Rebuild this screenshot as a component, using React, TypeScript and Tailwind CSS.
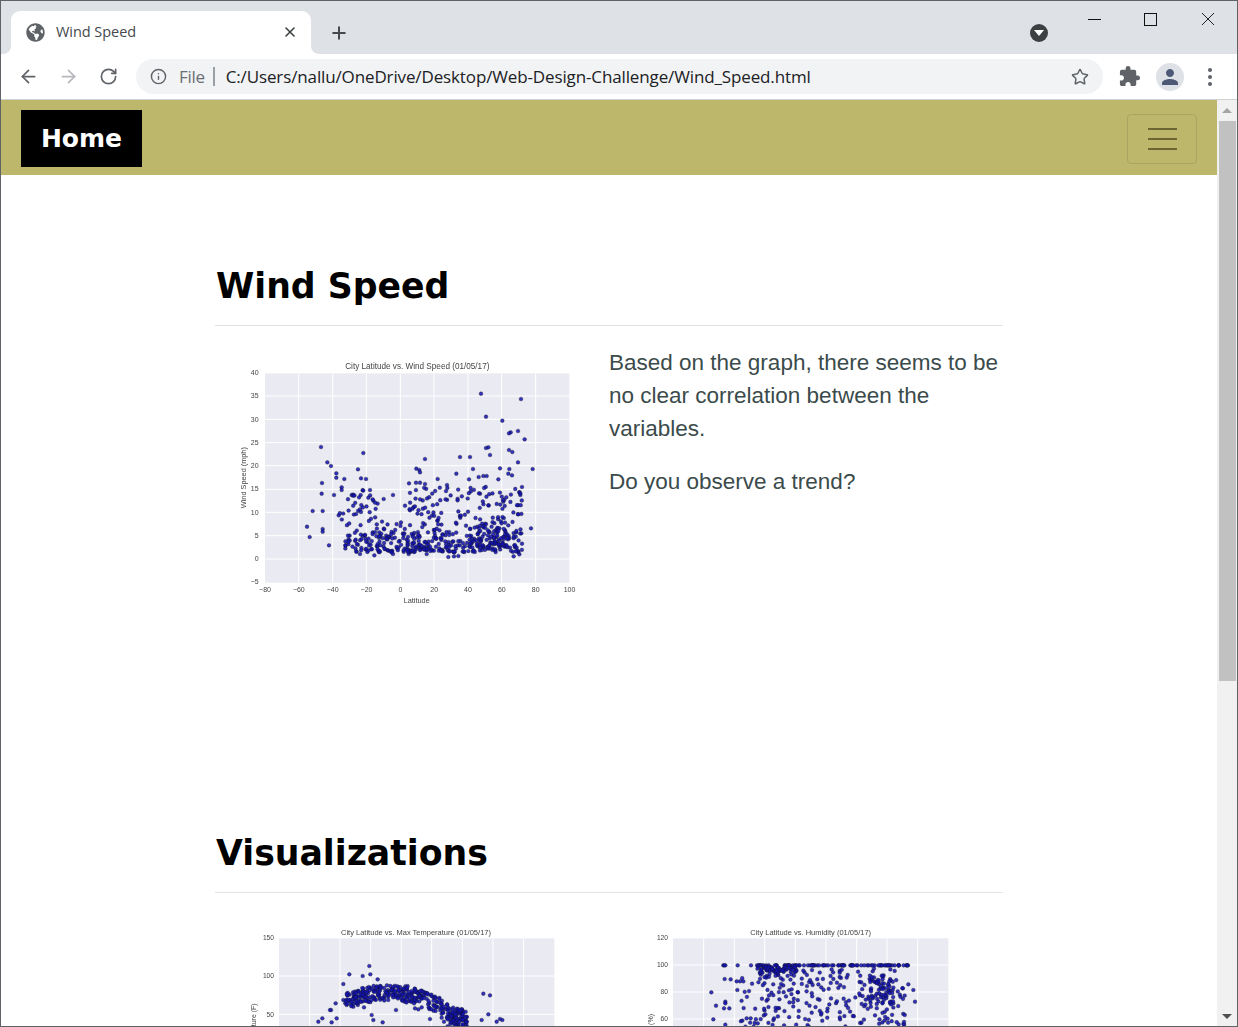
import React from 'react';
import { ArrowLeft, ArrowRight, RotateCw, Info, Star, Plus, X } from 'lucide-react';
import { FaGlobeAmericas } from 'react-icons/fa';
import { MdExtension, MdPerson } from 'react-icons/md';

type Pt = [number, number];

// small seeded random so the scatter stays the same between runs
const makeRand = (seed: number) => () => {
  seed = (seed * 1664525 + 1013904223) % 4294967296;
  return seed / 4294967296;
};

const windOutliers: Pt[] = [
  [753,116],[873,132],[768,185],[817,197],[864,228],[842,232],[837,235],[884,253],[273,276],[292,322],[303,333],[400,294],
  [585,312],[690,306],[720,306],[775,277],[768,279],[780,300],[837,285],[847,291],[864,322],[908,342],[384,343],[393,370],
  [408,372],[319,355],[319,368],[343,372],[276,384],[275,416],[278,468],[248,468],[231,515],[239,546],[278,522],[278,530],
  [297,571],[559,341],[568,345],[570,352],[537,385],[558,383],[570,383],[585,387],[876,396],[871,420],[903,520],[729,342],
  [679,356],[623,372],[651,390],[717,373],[746,366],[760,363],[770,363],[805,373],[835,356],[846,361],[838,342],[810,340],
  [489,420],[461,432],[525,452],[335,397],[335,405],[312,420],[365,420],[392,420],[420,405],[430,437],[428,433],
  [655,606],[672,604],[685,603],[851,604],[868,598],[390,597],[433,601],[489,597],[536,597],[590,597],
];

const windPoints = (() => {
  const r = makeRand(17);
  const pts: Pt[] = [...windOutliers];
  for (let i = 0; i < 240; i++) pts.push([530 + r() * 350, 592 - 90 * r() * Math.sqrt(r())]);
  for (let i = 0; i < 120; i++) pts.push([345 + r() * 190, 592 - 105 * r() * Math.sqrt(r())]);
  for (let i = 0; i < 105; i++) pts.push([530 + r() * 350, 395 + r() * 115]);
  for (let i = 0; i < 30; i++) pts.push([325 + r() * 120, 405 + r() * 95]);
  for (let i = 0; i < 40; i++) pts.push([740 + r() * 100, 500 + r() * 80]);
  return pts;
})();

const tempPoints = (() => {
  const r = makeRand(5);
  const pts: Pt[] = [
    [388,138],[328,163],[368,168],[391,163],[413,178],[310,192],[730,221],[750,226],[745,283],[770,305],[780,297],[787,300],
    [395,285],[400,300],[428,307],[725,300],[273,270],[270,270],[290,295],[275,307],[247,295],[235,305],[570,297],[605,293],
    [612,305],[287,250],[468,270],[525,265],[535,268],[545,262],[310,240],[322,225],[340,260],[372,262],
  ];
  for (let i = 0; i < 330; i++) {
    const x = 315 + r() * 370;
    const base = x < 450 ? 205 + (450 - x) * (450 - x) * 0.0013 : 205 + (x - 450) * (x - 450) * 0.00184;
    pts.push([x, base + r() * 50 - 12]);
  }
  for (let i = 0; i < 45; i++) pts.push([620 + r() * 60, 265 + r() * 55]);
  return pts;
})();

const humidityPoints = (() => {
  const r = makeRand(41);
  const pts: Pt[] = [
    [214,217],[228,257],[256,245],[256,250],[252,265],[268,265],[254,177],[272,178],[220,298],[256,314],[820,210],[825,245],
    [805,193],[250,136],[253,136],[256,136],[293,136],[333,136],[290,184],[300,184],[310,184],[292,210],[320,295],[332,295],
  ];
  for (let i = 0; i < 90; i++) pts.push([350 + r() * 455, 136]);
  for (let i = 0; i < 70; i++) pts.push([350 + r() * 120, 140 + r() * r() * 60]);
  for (let i = 0; i < 230; i++) pts.push([300 + r() * 495, 145 + r() * 175]);
  for (let i = 0; i < 50; i++) pts.push([690 + r() * 70, 165 + r() * 90]);
  return pts;
})();

interface ScatterProps {
  width: number;
  height: number;
  title: string;
  titleX: number;
  titleY: number;
  titleSize: number;
  tickSize: number;
  plot: { left: number; right: number; top: number; bottom: number };
  vLines: number[];
  hLines: number[];
  yTicks: { y: number; label: string }[];
  xTicks?: { x: number; label: string }[];
  yLabel: { x: number; y: number; text: string; anchor: 'middle' | 'end' };
  xLabel?: { x: number; y: number; text: string };
  points: Pt[];
  tickX: number;
}

// coordinates here are read off the 3x crops, so viewBox is 3x the on-screen size
const Scatter: React.FC<ScatterProps> = ({ width, height, title, titleX, titleY, titleSize, tickSize, plot, vLines, hLines, yTicks, xTicks, yLabel, xLabel, points, tickX }) => (
  <svg width={width} height={height} viewBox={`0 0 ${width * 3} ${height * 3}`} className="block blur-[0.45px]" style={{ fontFamily: '"Liberation Sans", Arial, sans-serif' }}>
    <rect x={plot.left} y={plot.top} width={plot.right - plot.left} height={plot.bottom - plot.top} fill="#eaeaf2" />
    {vLines.map((x) => <line key={x} x1={x} x2={x} y1={plot.top} y2={plot.bottom} stroke="#fff" strokeWidth="3" />)}
    {hLines.map((y) => <line key={y} x1={plot.left} x2={plot.right} y1={y} y2={y} stroke="#fff" strokeWidth="3" />)}
    <text x={titleX} y={titleY} textAnchor="middle" fontSize={titleSize} fill="#444">{title}</text>
    {yTicks.map((t) => <text key={t.label} x={tickX} y={t.y + 7} textAnchor="end" fontSize={tickSize} fill="#444">{t.label}</text>)}
    {xTicks?.map((t) => <text key={t.label} x={t.x} y={plot.bottom + 27} textAnchor="middle" fontSize={tickSize} fill="#444">{t.label}</text>)}
    <text transform={`translate(${yLabel.x} ${yLabel.y}) rotate(-90)`} textAnchor={yLabel.anchor} fontSize={tickSize + 1} fill="#444">{yLabel.text}</text>
    {xLabel && <text x={xLabel.x} y={xLabel.y} textAnchor="middle" fontSize={tickSize + 1} fill="#444">{xLabel.text}</text>}
    {points.map(([x, y], i) => <circle key={i} cx={x} cy={y} r="5.6" fill="#1212b4" fillOpacity="0.85" stroke="#111" strokeWidth="1" />)}
  </svg>
);

const BrowserChrome = () => (
  <>
    <div className="h-[53px] bg-[#dee1e6] flex items-end pl-[10px] shrink-0">
      <div className="relative w-[300px] h-[43px] bg-white rounded-t-[9px] flex items-center pl-[15px] pr-[13px] pb-[1px] text-[#45494e]">
        <span className="absolute -left-[8px] bottom-0 w-[8px] h-[8px] bg-white"><span className="block w-full h-full bg-[#dee1e6] rounded-br-[8px]" /></span>
        <span className="absolute -right-[8px] bottom-0 w-[8px] h-[8px] bg-white"><span className="block w-full h-full bg-[#dee1e6] rounded-bl-[8px]" /></span>
        <FaGlobeAmericas size={19} className="text-[#5f6368] shrink-0" />
        <span className="ml-[11px] flex-1 text-[14.5px] font-['Open_Sans',sans-serif] tracking-[-0.05px]">Wind Speed</span>
        <X size={16} strokeWidth={2.4} className="text-[#3c4043]" />
      </div>
      <div className="ml-[18px] h-[43px] flex items-center">
        <Plus size={20} strokeWidth={2.4} className="text-[#45494e]" />
      </div>
      <div className="ml-[681px] h-[43px] flex items-center">
        <div className="w-[18px] h-[18px] rounded-full bg-[#3c4043] flex items-center justify-center">
          <div className="w-0 h-0 border-l-[5px] border-r-[5px] border-t-[6px] border-l-transparent border-r-transparent border-t-white" />
        </div>
      </div>
      <div className="self-start flex items-center ml-[40px] h-[36px]">
        <span className="w-[13px] h-px bg-[#111]" />
        <span className="ml-[43px] w-[13px] h-[13px] border border-[#111]" />
        <svg width="14" height="14" viewBox="0 0 14 14" className="ml-[44px]">
          <path d="M1 1 L13 13 M13 1 L1 13" stroke="#222" strokeWidth="1" fill="none" />
        </svg>
      </div>
    </div>
    <div className="h-[46px] bg-white flex items-center pl-[17px] border-b border-[#d0d2d5] shrink-0">
      <ArrowLeft size={21} strokeWidth={2} className="text-[#5f6368]" />
      <ArrowRight size={21} strokeWidth={2} className="text-[#b6b8bb] ml-[19px]" />
      <RotateCw size={19} strokeWidth={2.1} className="text-[#5f6368] ml-[20px]" />
      <div className="ml-[18px] w-[967px] h-[35px] rounded-full bg-[#f1f3f4] flex items-center pl-[14px] pr-[14px]">
        <Info size={17} strokeWidth={2} className="text-[#5f6368]" />
        <span className="ml-[12px] text-[#6b6e72] text-[17px] font-['Open_Sans',sans-serif] tracking-[-0.3px]">File</span>
        <span className="ml-[8px] w-[2px] h-[19px] bg-[#9aa0a6]" />
        <span className="ml-[11px] flex-1 text-[#202124] text-[17px] font-['Open_Sans',sans-serif] tracking-[-0.13px] whitespace-nowrap">C:/Users/nallu/OneDrive/Desktop/Web-Design-Challenge/Wind_Speed.html</span>
        <Star size={18} strokeWidth={2} className="text-[#5f6368]" />
      </div>
      <MdExtension size={23} className="text-[#5f6368] ml-[15px]" />
      <div className="ml-[15px] w-[28px] h-[28px] rounded-full bg-[#dee1e6] flex items-center justify-center">
        <MdPerson size={24} className="text-[#4e5a75]" />
      </div>
      <div className="ml-[24px] flex flex-col gap-[3px]">
        <span className="w-[4px] h-[4px] rounded-full bg-[#5f6368]" />
        <span className="w-[4px] h-[4px] rounded-full bg-[#5f6368]" />
        <span className="w-[4px] h-[4px] rounded-full bg-[#5f6368]" />
      </div>
    </div>
  </>
);

const Scrollbar = () => (
  <div className="w-[20px] shrink-0 bg-[#f1f1f1] flex flex-col items-center">
    <div className="h-[21px] flex items-center justify-center">
      <div className="w-0 h-0 border-l-[5px] border-r-[5px] border-b-[5px] border-l-transparent border-r-transparent border-b-[#a3a3a3]" />
    </div>
    <div className="w-[17px] h-[560px] bg-[#c1c1c1]" />
    <div className="flex-1" />
    <div className="h-[20px] flex items-center justify-center">
      <div className="w-0 h-0 border-l-[5px] border-r-[5px] border-t-[5px] border-l-transparent border-r-transparent border-t-[#505050]" />
    </div>
  </div>
);

const headingClass = "font-['DejaVu_Sans',sans-serif] font-bold text-[34.7px] leading-[44px] text-black pl-[1px]";

export default function App() {
  return (
    <div className="w-[1238px] h-[1027px] overflow-hidden border border-[#5f6368] flex flex-col bg-white">
      <BrowserChrome />
      <div className="flex-1 flex min-h-0">
        <main className="flex-1 min-w-0 overflow-hidden">
          <nav className="h-[75px] bg-[#bdb76b] flex items-center justify-between pl-[20px] pr-[20px]">
            <a className="w-[121px] h-[57px] bg-black text-white flex items-center justify-center font-['DejaVu_Sans',sans-serif] font-bold text-[25px] pt-[1px] mt-[1px]">Home</a>
            <button className="w-[70px] h-[50px] border border-black/10 rounded-[4px] flex flex-col items-center justify-center gap-[8px] mt-[2px]">
              <span className="w-[29px] h-[2px] bg-[#6b6534]" />
              <span className="w-[29px] h-[2px] bg-[#6b6534]" />
              <span className="w-[29px] h-[2px] bg-[#6b6534]" />
            </button>
          </nav>

          <div className="w-[788px] mx-auto">
            <section className="pt-[89px]">
              <h1 className={headingClass}>Wind Speed</h1>
              <div className="mt-[17px] h-px bg-[#e2e2e2]" />
              <div className="grid grid-cols-2">
                <div className="pl-[15px] pt-[29px] h-[505px]">
                  <Scatter
                    width={360}
                    height={255}
                    title="City Latitude vs. Wind Speed (01/05/17)"
                    titleX={562}
                    titleY={43}
                    titleSize={24.5}
                    tickSize={21}
                    plot={{ left: 105, right: 1018, top: 55, bottom: 683 }}
                    vLines={[206, 308, 409, 511, 612, 714, 815, 917]}
                    hLines={[123, 193, 263, 332, 403, 472, 542, 612]}
                    yTicks={['40', '35', '30', '25', '20', '15', '10', '5', '0', '\u22125'].map((label, i) => ({ y: 53 + i * 69.8, label }))}
                    xTicks={['\u221280', '\u221260', '\u221240', '\u221220', '0', '20', '40', '60', '80', '100'].map((label, i) => ({ x: 105 + i * 101.5, label }))}
                    yLabel={{ x: 48, y: 368, text: 'Wind Speed (mph)', anchor: 'middle' }}
                    xLabel={{ x: 560, y: 743, text: 'Latitude' }}
                    points={windPoints}
                    tickX={86}
                  />
                </div>
                <div className="pt-[20px] font-['Liberation_Sans',Arial,sans-serif] text-[22.5px] leading-[33px] text-[#3b4b4b]">
                  <p className="mb-[20px]">Based on the graph, there seems to be no clear correlation between the variables.</p>
                  <p>Do you observe a trend?</p>
                </div>
              </div>
            </section>

            <section>
              <h1 className={headingClass}>Visualizations</h1>
              <div className="mt-[17px] h-px bg-[#e2e2e2]" />
              <div className="grid grid-cols-2 pt-[27px]">
                <div className="pl-[25px]">
                  <Scatter
                    width={330}
                    height={107}
                    title="City Latitude vs. Max Temperature (01/05/17)"
                    titleX={528}
                    titleY={45}
                    titleSize={22.5}
                    tickSize={20}
                    plot={{ left: 117, right: 943, top: 55, bottom: 321 }}
                    vLines={[209, 300, 392, 484, 575, 667, 759, 851]}
                    hLines={[168, 283]}
                    yTicks={[{ y: 53, label: '150' }, { y: 168, label: '100' }, { y: 283, label: '50' }]}
                    yLabel={{ x: 47, y: 250, text: 'Max Temperature (F)', anchor: 'end' }}
                    points={tempPoints}
                    tickX={102}
                  />
                </div>
                <div className="pl-[31px]">
                  <Scatter
                    width={330}
                    height={107}
                    title="City Latitude vs. Humidity (01/05/17)"
                    titleX={512}
                    titleY={45}
                    titleSize={22.5}
                    tickSize={20}
                    plot={{ left: 99, right: 925, top: 55, bottom: 321 }}
                    vLines={[191, 283, 374, 466, 558, 650, 741, 833]}
                    hLines={[135, 216, 297]}
                    yTicks={[{ y: 53, label: '120' }, { y: 135, label: '100' }, { y: 216, label: '80' }, { y: 297, label: '60' }]}
                    yLabel={{ x: 40, y: 282, text: 'Humidity (%)', anchor: 'end' }}
                    points={humidityPoints}
                    tickX={84}
                  />
                </div>
              </div>
            </section>
          </div>
        </main>
        <Scrollbar />
      </div>
    </div>
  );
}
